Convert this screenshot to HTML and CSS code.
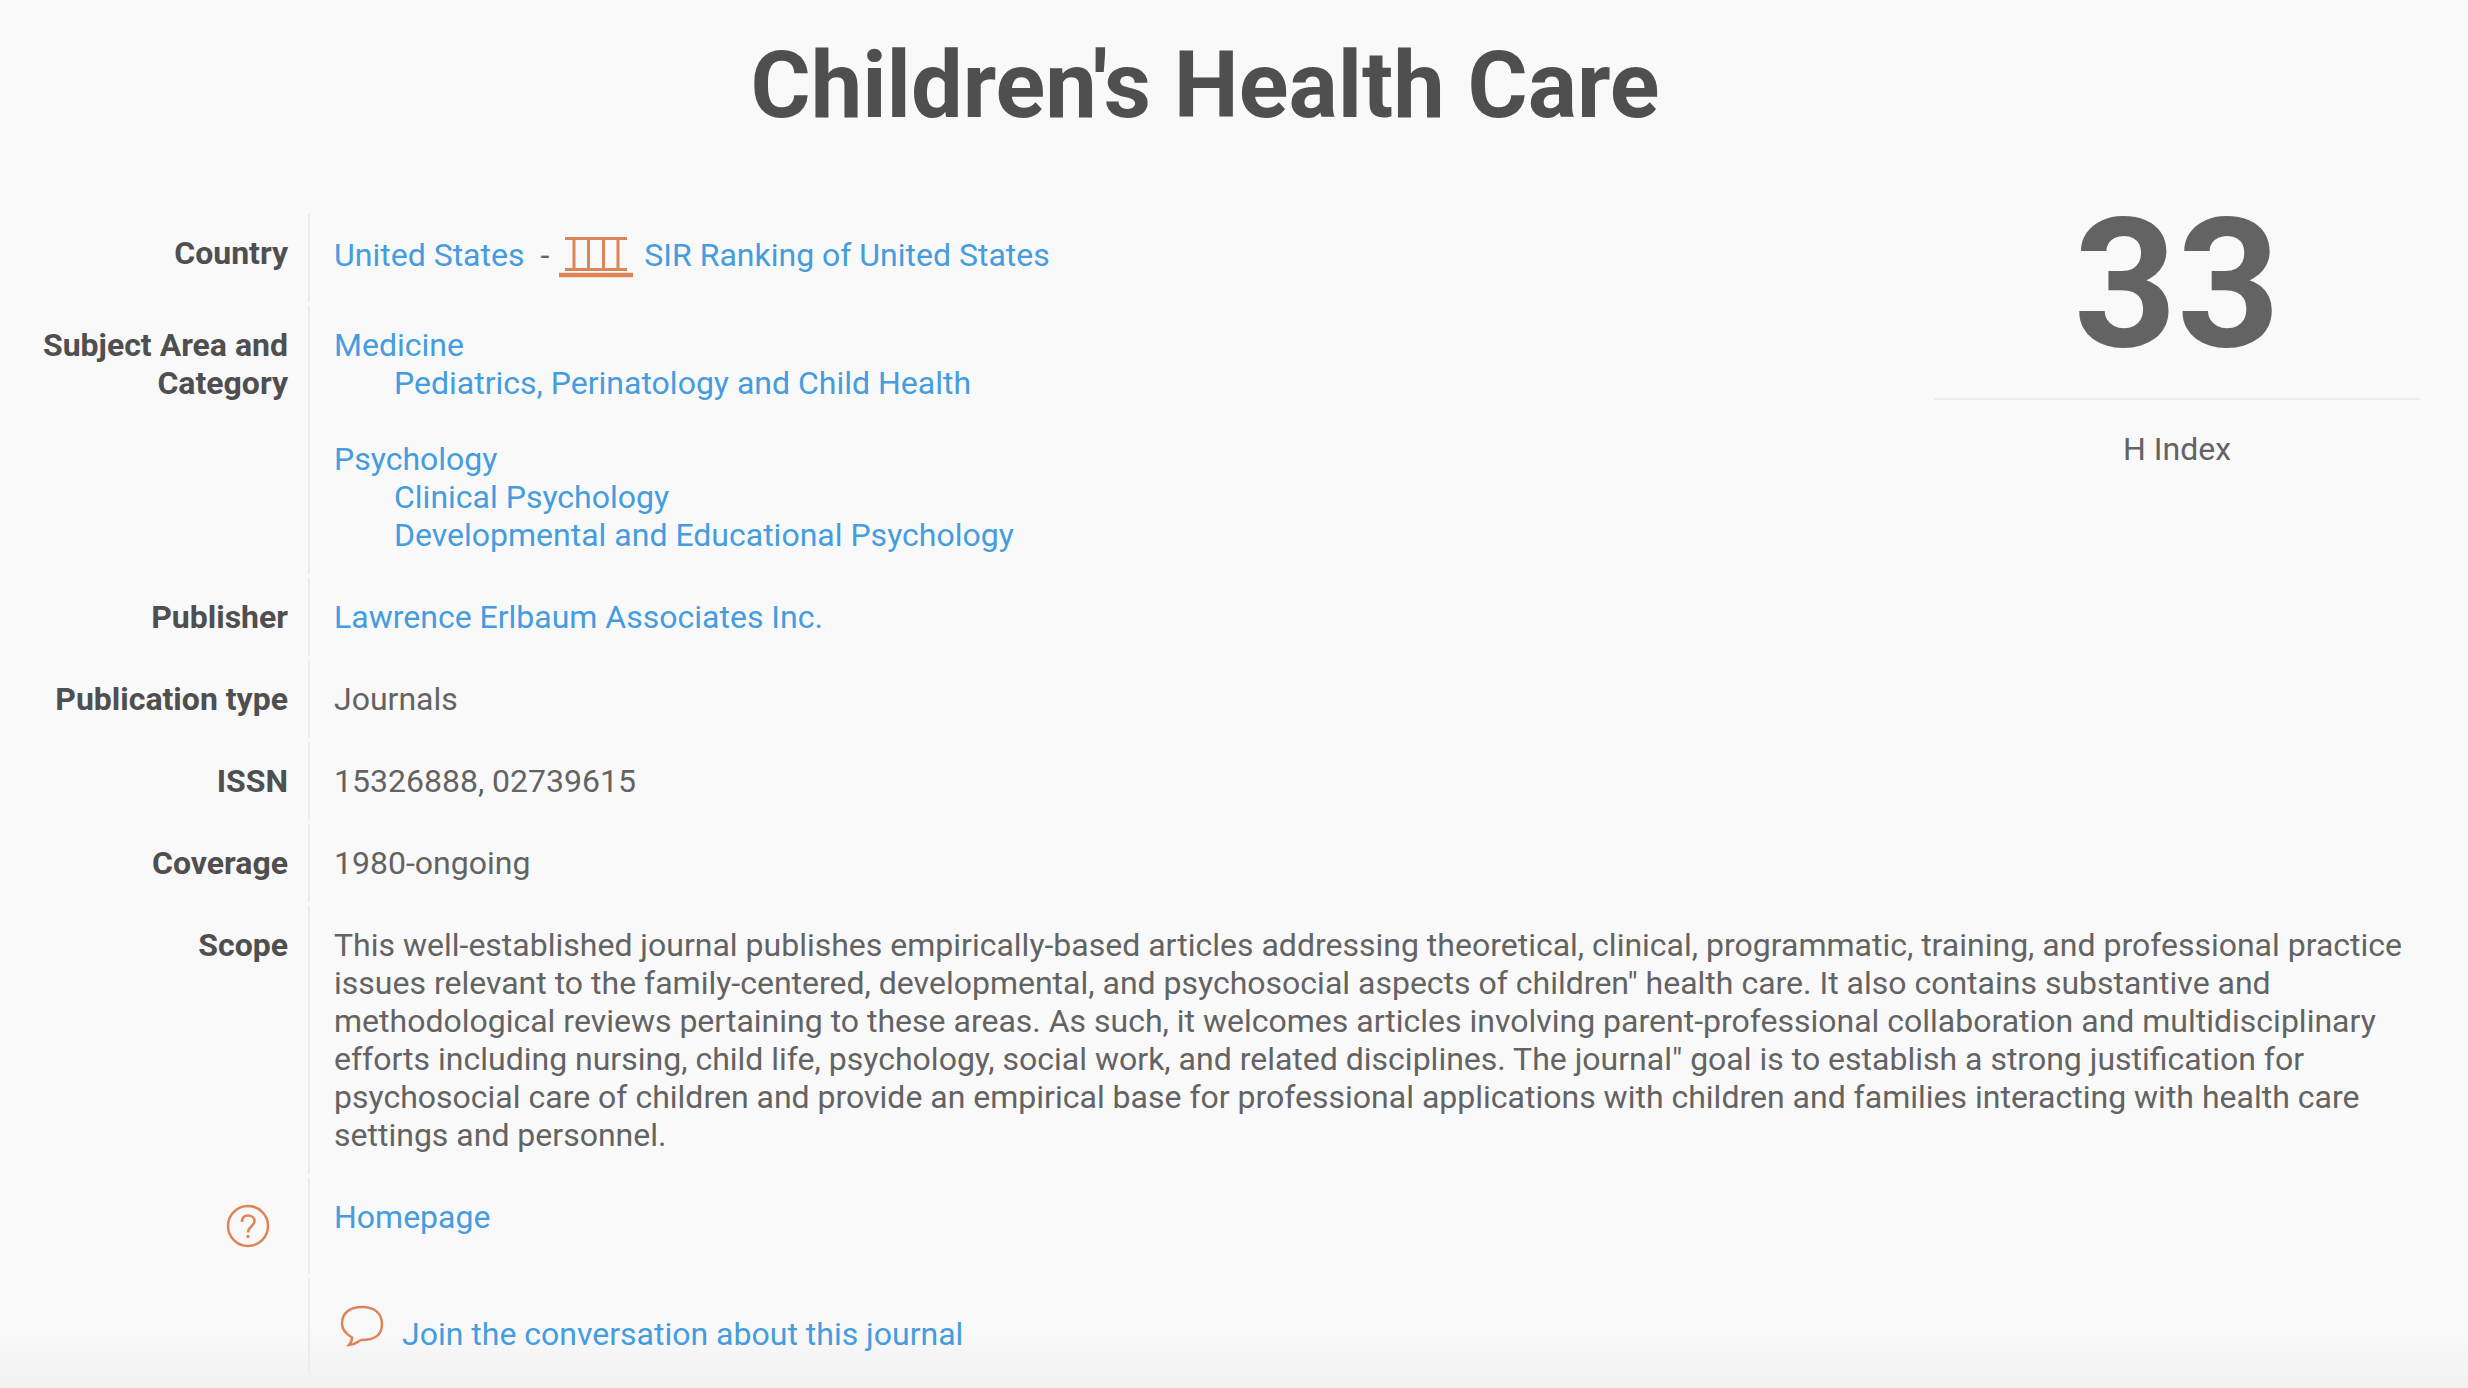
FILE: index.html
```html
<!DOCTYPE html>
<html lang="en">
<head>
<meta charset="utf-8">
<meta name="viewport" content="width=device-width, initial-scale=1">
<title>Children's Health Care</title>
<link rel="stylesheet" href="styles.css">
</head>
<body>
<main class="journal">
  <h1 class="title">Children's Health Care</h1>
  <table class="details">
    <colgroup><col class="col-label"><col><col class="col-index"></colgroup>
    <tbody>
      <tr>
        <th scope="row">Country</th>
        <td class="country">
          <div class="country-line">
            <a href="#us">United States</a>
            <span class="dash">-</span>
            <a class="ranking" href="#sir">
              <svg class="icon-columns" viewBox="0 0 76 42" width="76" height="42" aria-hidden="true">
                <path d="M7 2.500H69M7 33.500H69" stroke-width="3"/>
                <path d="M16 3V33M30.500 3V33M45.500 3V33M60 3V33" stroke-width="3"/>
                <path d="M1 39H75" stroke-width="4.500"/>
              </svg>
              <span>SIR Ranking of United States</span>
            </a>
          </div>
        </td>
        <td class="index" rowspan="5">
          <div class="index-value">33</div>
          <div class="index-label">H Index</div>
        </td>
      </tr>
      <tr>
        <th scope="row">Subject Area and Category</th>
        <td>
          <ul class="areas">
            <li><a href="#medicine">Medicine</a>
              <ul class="categories">
                <li><a href="#pediatrics">Pediatrics, Perinatology and Child Health</a></li>
              </ul>
            </li>
            <li><a href="#psychology">Psychology</a>
              <ul class="categories">
                <li><a href="#clinical">Clinical Psychology</a></li>
                <li><a href="#developmental">Developmental and Educational Psychology</a></li>
              </ul>
            </li>
          </ul>
        </td>
      </tr>
      <tr><th scope="row">Publisher</th><td><a href="#publisher">Lawrence Erlbaum Associates Inc.</a></td></tr>
      <tr><th scope="row">Publication type</th><td>Journals</td></tr>
      <tr><th scope="row">ISSN</th><td>15326888, 02739615</td></tr>
      <tr><th scope="row">Coverage</th><td colspan="2">1980-ongoing</td></tr>
      <tr>
        <th scope="row">Scope</th>
        <td colspan="2">This well-established journal publishes empirically-based articles addressing theoretical, clinical, programmatic, training, and professional practice issues relevant to the family-centered, developmental, and psychosocial aspects of children" health care. It also contains substantive and methodological reviews pertaining to these areas. As such, it welcomes articles involving parent-professional collaboration and multidisciplinary efforts including nursing, child life, psychology, social work, and related disciplines. The journal" goal is to establish a strong justification for psychosocial care of children and provide an empirical base for professional applications with children and families interacting with health care settings and personnel.</td>
      </tr>
      <tr class="tall">
        <th scope="row">
          <svg class="icon-help" viewBox="0 0 44 44" width="44" height="44" role="img" aria-label="Help">
            <circle cx="22" cy="22" r="20"/>
            <path d="M16 18C16 13.500 18.500 11.500 22 11.500S28.500 13.500 28.500 17C28.500 22.500 22 22.500 22 28.500"/>
            <circle class="dot" cx="22" cy="32.500" r="1.700"/>
          </svg>
        </th>
        <td colspan="2"><a href="#homepage">Homepage</a></td>
      </tr>
      <tr class="tall">
        <th></th>
        <td colspan="2">
          <a class="join" href="#comments">
            <svg class="icon-speech" viewBox="0 0 44 44" width="44" height="44" aria-hidden="true">
              <path d="M12 33.500C6 30 2 26 2 19.500C2 9 10 3 22 3S42 9 42 20C42 32 34 36 21 36C17 38 15 41 9 41C11.500 38.500 12 36 12 33.500Z"/>
            </svg>
            <span>Join the conversation about this journal</span>
          </a>
        </td>
      </tr>
    </tbody>
  </table>
</main>
</body>
</html>
```
FILE: styles.css
```css
* { box-sizing: border-box; }

body {
  margin: 0;
  min-height: 100vh;
  background: #f9f9f9 linear-gradient(to top, #f1f1f1, #f9f9f9 60px);
  color: #636363;
  font: 32px/38px Roboto, "Liberation Sans", sans-serif;
}

a { color: #459cde; text-decoration: none; }
a:hover { text-decoration: underline; }
ul { list-style: none; margin: 0; padding: 0; }

.journal { padding: 32px 48px 10px 20px; }

.title {
  margin: 0 0 70px;
  padding-right: 30px;
  color: #4f4f4f;
  font-size: 92px;
  line-height: 108px;
  font-weight: 700;
  text-align: center;
}

.details {
  width: 100%;
  table-layout: fixed;
  border-spacing: 0 4px;
}
.col-label { width: 288px; }
.col-index { width: 486px; }

.details th,
.details td { padding: 20px 0 20px 24px; vertical-align: top; }
.details th {
  padding: 20px 20px 20px 0;
  color: #4f4f4f;
  font-weight: 700;
  text-align: right;
}
.details td { border-left: 2px solid #ececec; }

.country-line { display: flex; align-items: flex-start; min-height: 48px; padding-top: 2px; }
.dash { margin: 0 9px 0 16px; }
.ranking { display: flex; gap: 10px; }

.areas { display: grid; gap: 38px; }
.categories { padding-left: 60px; }

.details .index { border: 0; padding: 0; text-align: center; }
.index-value {
  border-bottom: 2px solid #ececec;
  font-size: 180px;
  line-height: 142px;
  font-weight: 700;
  padding-bottom: 42px;
}
.index-label { padding-top: 30px; }

.tall { height: 96px; }

.details svg { flex: none; fill: none; stroke: #dd8459; }
.icon-help { display: block; margin: 6px 18px 0 auto; stroke-width: 2.5; }
.icon-help .dot { fill: #dd8459; stroke: none; }

.join { display: flex; gap: 18px; padding: 6px 0 0 6px; }
.join span { padding-top: 11px; }
.icon-speech { stroke-width: 2.5; }
```
